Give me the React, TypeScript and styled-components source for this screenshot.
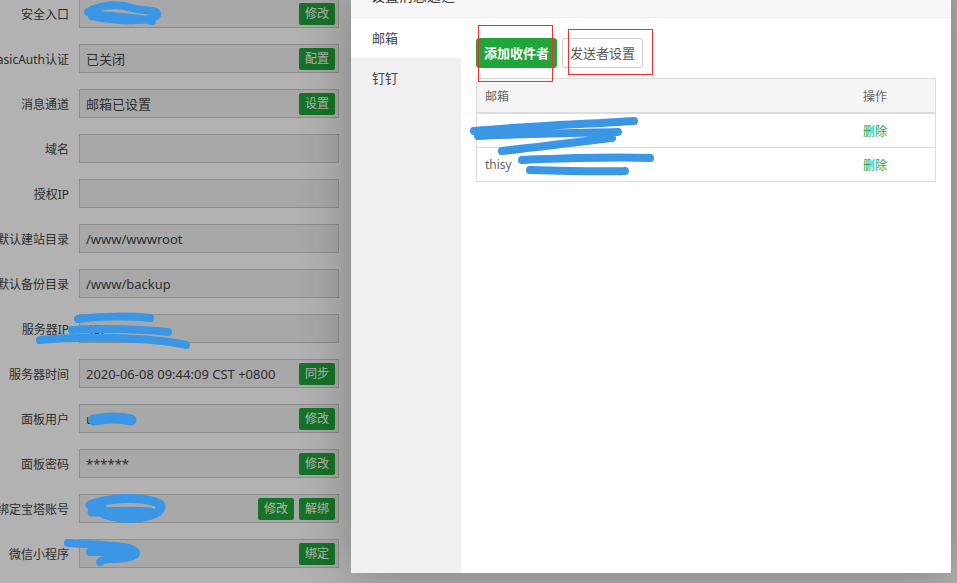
import React from 'react';
import styled, { createGlobalStyle } from 'styled-components';

const GlobalStyle = createGlobalStyle`
  html, body {
    margin: 0;
    padding: 0;
    background: #fff;
    overflow: hidden;
  }
  body {
    font-family: "Noto Sans", "Noto Sans CJK SC", sans-serif;
  }
`;

const Page = styled.div`
  position: relative;
  width: 957px;
  height: 583px;
  overflow: hidden;
  background: #fff;
`;

const Form = styled.div`
  display: flex;
  flex-direction: column;
  gap: 16px;
  margin: -1px 0 0 -31px;
`;

const Row = styled.div`
  display: grid;
  grid-template-columns: 100px 260px;
  column-gap: 10px;
  align-items: center;
`;

const Label = styled.span`
  text-align: right;
  font-size: 12px;
  color: #444;
  white-space: nowrap;
`;

const Field = styled.div`
  box-sizing: border-box;
  height: 29px;
  display: flex;
  align-items: center;
  gap: 5px;
  padding: 0 3px 0 6px;
  border: 1px solid #ccc;
  background: #f1f1f1;
  font-size: 13px;
  color: #444;
  white-space: nowrap;
`;

const Value = styled.span`
  flex: 1;
`;

const SmallBtn = styled.span`
  width: 36px;
  height: 22px;
  line-height: 22px;
  text-align: center;
  border-radius: 2px;
  background: #20a53a;
  color: #fff;
  font-size: 12px;
`;

const Shade = styled.div`
  position: absolute;
  inset: 0;
  background: rgba(0, 0, 0, 0.3);
`;

const Modal = styled.div`
  position: absolute;
  left: 351px;
  top: -25px;
  width: 600px;
  height: 598px;
  background: #fff;
  box-shadow: 1px 1px 50px rgba(0, 0, 0, 0.3);
  display: flex;
  flex-direction: column;
`;

const ModalTitle = styled.div`
  height: 42px;
  line-height: 42px;
  padding: 0 20px;
  background: #f8f8f8;
  border-bottom: 1px solid #eee;
  font-size: 14px;
  color: #333;
`;

const ModalBody = styled.div`
  flex: 1;
  display: flex;
`;

const TabList = styled.div`
  width: 110px;
  background: #f0f0f0;
`;

const Tab = styled.div<{ $active?: boolean }>`
  height: 40px;
  line-height: 40px;
  padding-left: 21px;
  font-size: 13px;
  color: #444;
  background: ${p => (p.$active ? '#fff' : 'transparent')};
`;

const Content = styled.div`
  flex: 1;
  padding: 20px 15px;
`;

const Toolbar = styled.div`
  display: flex;
  gap: 5px;
`;

const Button = styled.span<{ $primary?: boolean }>`
  box-sizing: border-box;
  height: 30px;
  line-height: 28px;
  padding: 0 7px;
  border-radius: 3px;
  font-size: 13px;
  border: 1px solid ${p => (p.$primary ? '#20a53a' : '#ccc')};
  background: ${p => (p.$primary ? '#20a53a' : '#fff')};
  color: ${p => (p.$primary ? '#fff' : '#555')};
  font-weight: ${p => (p.$primary ? 700 : 400)};
`;

const Table = styled.table`
  margin-top: 10px;
  width: 100%;
  border-collapse: collapse;
  border: 1px solid #ddd;
  font-size: 12px;
  color: #666;
`;

const Th = styled.th<{ $w?: number }>`
  height: 33px;
  padding: 0 8px;
  text-align: left;
  font-weight: 400;
  background: #f5f5f5;
  border-bottom: 2px solid #ddd;
  width: ${p => (p.$w ? `${p.$w}px` : 'auto')};
`;

const Td = styled.td`
  height: 33px;
  padding: 0 8px;
  border-bottom: 1px solid #ddd;
`;

const DelLink = styled.span`
  color: #20a53a;
`;

const Mark = styled.div<{ $x: number; $y: number; $w: number; $h: number }>`
  position: absolute;
  left: ${p => p.$x}px;
  top: ${p => p.$y}px;
  width: ${p => p.$w}px;
  height: ${p => p.$h}px;
  border: 1px solid #f03030;
  box-sizing: border-box;
`;

const Scribbles = styled.svg`
  position: absolute;
  inset: 0;
  pointer-events: none;
`;

type FormRow = { label: string; value?: string; buttons?: string[] };

const rows: FormRow[] = [
  { label: '安全入口', value: '', buttons: ['修改'] },
  { label: 'BasicAuth认证', value: '已关闭', buttons: ['配置'] },
  { label: '消息通道', value: '邮箱已设置', buttons: ['设置'] },
  { label: '域名' },
  { label: '授权IP' },
  { label: '默认建站目录', value: '/www/wwwroot' },
  { label: '默认备份目录', value: '/www/backup' },
  { label: '服务器IP', value: '45.' },
  { label: '服务器时间', value: '2020-06-08 09:44:09 CST +0800', buttons: ['同步'] },
  { label: '面板用户', value: 'u', buttons: ['修改'] },
  { label: '面板密码', value: '******', buttons: ['修改'] },
  { label: '绑定宝塔账号', value: '', buttons: ['修改', '解绑'] },
  { label: '微信小程序', value: '', buttons: ['绑定'] },
];

const emails = ['', 'thisy'];

const App: React.FC = () => {
  return (
    <Page>
      <GlobalStyle />
      <Form>
        {rows.map(r => (
          <Row key={r.label}>
            <Label>{r.label}</Label>
            <Field>
              <Value>{r.value}</Value>
              {r.buttons?.map(b => (
                <SmallBtn key={b}>{b}</SmallBtn>
              ))}
            </Field>
          </Row>
        ))}
      </Form>
      <Shade />
      <Modal>
        <ModalTitle>设置消息通道</ModalTitle>
        <ModalBody>
          <TabList>
            <Tab $active>邮箱</Tab>
            <Tab>钉钉</Tab>
          </TabList>
          <Content>
            <Toolbar>
              <Button $primary>添加收件者</Button>
              <Button>发送者设置</Button>
            </Toolbar>
            <Table>
              <thead>
                <tr>
                  <Th>邮箱</Th>
                  <Th $w={64}>操作</Th>
                </tr>
              </thead>
              <tbody>
                {emails.map((e, i) => (
                  <tr key={i}>
                    <Td>{e}</Td>
                    <Td>
                      <DelLink>删除</DelLink>
                    </Td>
                  </tr>
                ))}
              </tbody>
            </Table>
          </Content>
        </ModalBody>
      </Modal>
      <Mark $x={478} $y={25} $w={75} $h={57} />
      <Mark $x={568} $y={29} $w={85} $h={46} />
      <Scribbles width="957" height="583" viewBox="0 0 957 583">
        <g fill="none" stroke="#3b97e6" strokeLinecap="round" strokeLinejoin="round">
          <path strokeWidth="8" d="M88 12 C100 5 118 3 132 8 C146 12 158 9 157 15 C154 22 120 22 92 16 M100 15 C120 17 140 18 152 21" />
          <path strokeWidth="8" d="M78 319 C100 316 130 316 150 318 M72 330 C100 328 140 329 168 332 M40 340 C80 336 150 337 186 345" />
          <path strokeWidth="11" d="M94 420 C105 418 120 417 131 420" />
          <path strokeWidth="9" d="M90 505 C110 497 145 496 160 504 C166 514 140 520 122 518 C104 516 96 512 102 507 M92 512 C110 512 130 510 150 512" />
          <path strokeWidth="8" d="M68 543 C90 544 110 545 124 547 C140 550 140 556 124 558 C112 560 104 558 100 562 M90 552 L132 552" />
          <path strokeWidth="8" d="M474 131 C530 126 590 124 634 121 M478 136 C520 134 580 133 618 132 M502 151 C540 147 585 141 612 138" />
          <path strokeWidth="8" d="M522 160 C570 158 620 157 650 158 M530 170 C570 171 605 172 625 171" />
        </g>
      </Scribbles>
    </Page>
  );
};

export default App;
